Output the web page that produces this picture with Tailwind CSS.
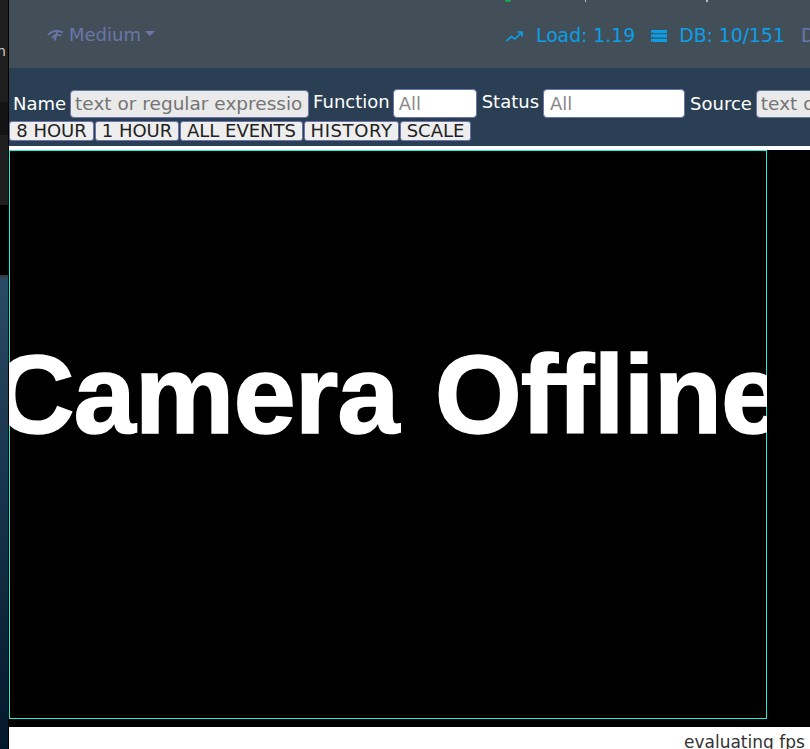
<!DOCTYPE html>
<html>
<head>
<meta charset="utf-8">
<script src="https://cdn.jsdelivr.net/npm/@tailwindcss/browser@4"></script>
</head>
<body class="w-[810px] h-[749px] overflow-hidden bg-white font-['DejaVu_Sans',sans-serif]">
<div class="flex w-[810px] h-[749px] overflow-hidden">
  <div class="w-[9px] h-[749px] shrink-0 flex flex-col overflow-hidden border-r border-black">
    <div class="h-[102px] bg-[#1e1e1f] text-[#cccccc] text-[14px] leading-[102px] whitespace-nowrap -indent-[3px]">n</div>
    <div class="h-[33px] bg-[#141415]"></div>
    <div class="h-[70px] bg-[#1f1f20]"></div>
    <div class="h-[70px] bg-black"></div>
    <div class="h-[2px] bg-[#3a3a3a]"></div>
    <div class="flex-1 bg-gradient-to-b from-[#2a4a63] via-[#163149] to-[#04182a]"></div>
  </div>
  <div class="flex-1 min-w-0 flex flex-col overflow-hidden">
    <div class="h-[68px] shrink-0 bg-[#424f58] flex items-center whitespace-nowrap text-[18px] relative">
      <div class="h-[2px] w-[6px] rounded-b-full bg-[#1fa84a] absolute left-[496px] top-0"></div>
      <div class="h-[2px] w-[1px] bg-[#b8bec2] absolute left-[576px] top-0"></div>
      <div class="h-[2px] w-[2px] bg-[#b8bec2] absolute left-[697px] top-0"></div>
      <div class="flex items-center pl-[38px] pt-[1px] text-[#6b75aa]">
        <svg class="w-[17px] h-[13px] mr-[5px]" viewBox="0 0 17 13" fill="none" stroke="currentColor"><path d="M1 7C4 3 11 1.500 16 4.500" stroke-width="2"/><path d="M5 10C6.500 7.500 10 6 14.500 7.500" stroke-width="1.800"/><path d="M10.500 3L7.500 12.500" stroke-width="2"/></svg>
        <span>Medium</span>
        <span class="ml-[4px] -mt-[2px] w-0 h-0 border-x-[5px] border-x-transparent border-t-[5px] border-t-[#6b75aa]"></span>
      </div>
      <div class="absolute left-[497px] top-[25px] flex items-center text-[18.8px] leading-[22px] text-[#0b9fe8]">
        <svg class="w-[17px] h-[11px] mr-[13px]" viewBox="0 0 17 11" fill="none" stroke="currentColor" stroke-width="1.700"><path d="M0.500 10L5.500 5.500L9 8L15.500 1.500"/><path d="M11.500 1H16V5.500"/></svg>
        <span>Load: 1.19</span>
        <svg class="w-[16px] h-[12px] ml-[16px] mr-[12px]" viewBox="0 0 16 12" fill="currentColor"><path d="M0 0h16v3.300H2v-1H1v1H0zM0 4.300h16v3.300H2v-1H1v1H0zM0 8.700h16V12H2v-1H1v1H0z"/></svg>
        <span>DB: 10/151</span>
        <span class="ml-[16px] text-[#6b75aa]">Disk</span>
      </div>
    </div>
    <div class="h-[78px] shrink-0 bg-[#2b3f54] overflow-hidden text-white text-[18px] pt-[21px] pl-[4px] whitespace-nowrap">
      <div class="flex items-center h-[29px]">
        <span>Name</span>
        <input class="ml-[4px] w-[239px] h-[28px] shrink-0 bg-[#eaeaea] rounded-[4px] border border-[#6b75aa] px-[4px] text-[18.500px] text-[#222] placeholder:text-[#757575]" placeholder="text or regular expression">
        <span class="ml-[4px] -mt-[4px]">Function</span>
        <input class="ml-[3px] w-[84px] h-[29px] shrink-0 bg-white rounded-[4px] border border-[#6b75aa] px-[5px] text-[18px] placeholder:text-[#8a8a8a]" placeholder="All">
        <span class="ml-[5px] -mt-[4px]">Status</span>
        <input class="ml-[4px] w-[142px] h-[29px] shrink-0 bg-white rounded-[4px] border border-[#6b75aa] px-[6px] text-[18px] placeholder:text-[#8a8a8a]" placeholder="All">
        <span class="ml-[5px]">Source</span>
        <input class="ml-[4px] w-[239px] h-[28px] shrink-0 bg-[#eaeaea] rounded-[4px] border border-[#6b75aa] px-[4px] text-[18.500px] placeholder:text-[#757575]" placeholder="text or regular expression">
      </div>
      <div class="flex gap-[1px] -ml-[4px] mt-[3px]">
        <button class="w-[85px] h-[20px] leading-none bg-[#eeeeee] text-[#222] text-[18px] rounded-[3px] border border-[#6b75aa]">8 HOUR</button>
        <button class="w-[84px] h-[20px] leading-none bg-[#eeeeee] text-[#222] text-[18px] rounded-[3px] border border-[#6b75aa]">1 HOUR</button>
        <button class="w-[123px] h-[20px] leading-none bg-[#eeeeee] text-[#222] text-[18px] rounded-[3px] border border-[#6b75aa]">ALL EVENTS</button>
        <button class="w-[95px] h-[20px] leading-none bg-[#eeeeee] text-[#222] text-[18px] tracking-[0.6px] rounded-[3px] border border-[#6b75aa]">HISTORY</button>
        <button class="w-[71px] h-[20px] leading-none bg-[#eeeeee] text-[#222] text-[18px] rounded-[3px] border border-[#6b75aa]">SCALE</button>
      </div>
    </div>
    <div class="h-[4px] shrink-0 bg-white"></div>
    <div class="h-[577px] shrink-0 bg-black">
      <div class="w-[758px] h-[569px] border border-[#19f0dc] flex items-center justify-center pb-[80px] [clip-path:inset(0)]">
        <span class="font-['Liberation_Sans',sans-serif] font-bold text-[112px] leading-none tracking-[-1px] [word-spacing:6px] text-white whitespace-nowrap [-webkit-text-stroke:1.500px_white]">Camera Offline</span>
      </div>
    </div>
    <div class="flex-1 bg-white text-[17px] text-[#333] pl-[675px] pt-[3px] whitespace-nowrap">evaluating fps</div>
  </div>
</div>
</body>
</html>
